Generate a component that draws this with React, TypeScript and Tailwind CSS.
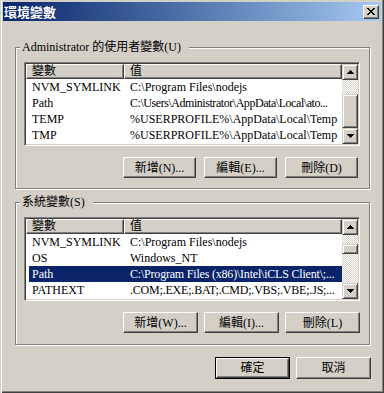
import React from "react";

const raised =
  "border border-t-white border-l-white border-r-[#404040] border-b-[#404040] shadow-[inset_-1px_-1px_0_#808080] bg-[#d4d0c8]";
const sbRaised =
  "border border-t-[#d4d0c8] border-l-[#d4d0c8] border-r-[#404040] border-b-[#404040] shadow-[inset_1px_1px_0_#fff,inset_-1px_-1px_0_#808080] bg-[#d4d0c8]";
const sunken =
  "border border-t-[#808080] border-l-[#808080] border-r-white border-b-white p-px shadow-[inset_1px_1px_0_#404040,inset_-1px_-1px_0_#d4d0c8]";
const checker =
  "bg-[repeating-conic-gradient(#d4d0c8_0%_25%,#ffffff_0%_50%)] bg-size-[2px_2px]";

// [name, value, extra class for the value cell]
type Row = [string, string, string?];

const userRows: Row[] = [
  ["NVM_SYMLINK", "C:\\Program Files\\nodejs"],
  ["Path", "C:\\Users\\Administrator\\AppData\\Local\\ato...", "tracking-[-0.45px]"],
  ["TEMP", "%USERPROFILE%\\AppData\\Local\\Temp"],
  ["TMP", "%USERPROFILE%\\AppData\\Local\\Temp"],
];

const sysRows: Row[] = [
  ["NVM_SYMLINK", "C:\\Program Files\\nodejs"],
  ["OS", "Windows_NT"],
  ["Path", "C:\\Program Files (x86)\\Intel\\iCLS Client\\;...", "tracking-[-0.2px]"],
  ["PATHEXT", ".COM;.EXE;.BAT;.CMD;.VBS;.VBE;.JS;...", "tracking-[-0.2px]"],
];

function Arrow({ up }: { up?: boolean }) {
  const rows = up
    ? [
        [3, 0, 1],
        [2, 1, 3],
        [1, 2, 5],
        [0, 3, 7],
      ]
    : [
        [0, 0, 7],
        [1, 1, 5],
        [2, 2, 3],
        [3, 3, 1],
      ];
  return (
    <svg width="7" height="4" viewBox="0 0 7 4" shapeRendering="crispEdges">
      {rows.map(([x, y, w]) => (
        <rect key={y} x={x} y={y} width={w} height={1} fill="#000" />
      ))}
    </svg>
  );
}

function CloseGlyph() {
  const px = [
    [0, 0, 2], [6, 0, 2],
    [1, 1, 2], [5, 1, 2],
    [2, 2, 4],
    [3, 3, 2],
    [2, 4, 4],
    [1, 5, 2], [5, 5, 2],
    [0, 6, 2], [6, 6, 2],
  ];
  return (
    <svg width="8" height="7" viewBox="0 0 8 7" shapeRendering="crispEdges">
      {px.map(([x, y, w], i) => (
        <rect key={i} x={x} y={y} width={w} height={1} fill="#000" />
      ))}
    </svg>
  );
}

function ScrollBar({ top, thumb }: { top: string; thumb: string }) {
  return (
    <div className="flex w-[16px] shrink-0 flex-col">
      <div className={`flex h-[16px] items-center justify-center ${sbRaised}`}>
        <Arrow up />
      </div>
      <div className={`${top} ${checker}`} />
      <div className={`${thumb} ${sbRaised}`} />
      <div className={`flex-1 ${checker}`} />
      <div className={`flex h-[16px] items-center justify-center ${sbRaised}`}>
        <Arrow />
      </div>
    </div>
  );
}

function ListView({ rows, sel, bar }: { rows: Row[]; sel?: number; bar: React.ReactNode }) {
  return (
    <div className={`flex h-[84px] w-[336px] bg-white ${sunken}`}>
      <div className="flex min-w-0 flex-1 flex-col overflow-hidden">
        <div className="flex h-[15px] shrink-0 leading-[13px]">
          <div className={`w-[98px] pl-[5px] ${raised}`}>變數</div>
          <div className={`flex-1 pl-[5px] ${raised}`}>值</div>
        </div>
        {rows.map(([name, value, tight], i) => (
          <div key={name} className="flex h-[16px] shrink-0 pl-[3px] leading-[16px]">
            <div className={`flex min-w-0 flex-1 ${i === sel ? "bg-[#0a246a] text-white" : ""}`}>
              <div className="w-[95px] shrink-0 overflow-hidden whitespace-nowrap pl-[3px]">{name}</div>
              <div className={`min-w-0 flex-1 overflow-hidden whitespace-nowrap pl-[6px] ${tight ?? ""}`}>
                {value}
              </div>
            </div>
          </div>
        ))}
      </div>
      {bar}
    </div>
  );
}

function Btn({ children, className }: { children: React.ReactNode; className: string }) {
  return (
    <button className={`flex items-center justify-center leading-none ${raised} ${className}`}>
      {children}
    </button>
  );
}

function Group({ label, h, children }: { label: string; h: string; children: React.ReactNode }) {
  return (
    <div
      className={`relative w-[355px] ${h} border border-[#808080] pl-[8px] pt-[14px] shadow-[inset_1px_1px_0_#fff,1px_1px_0_#fff]`}
    >
      <span className="absolute -top-[9px] left-[4px] bg-[#d4d0c8] pl-[2px] pr-[8px] leading-[16px]">
        {label}
      </span>
      {children}
    </div>
  );
}

export default function App() {
  return (
    <div className="h-[393px] w-[384px] bg-[#d4d0c8] px-[3px] pt-[2px] font-['Liberation_Serif','Noto_Sans_CJK_TC',serif] text-[12px] text-black shadow-[inset_1px_0_0_#d4d0c8,inset_2px_0_0_#fff,inset_-1px_-1px_0_#404040,inset_-2px_-2px_0_#808080]">
      <div className="flex h-[19px] items-center justify-between bg-linear-to-r from-[#0a246a] to-[#a6caf0] pl-[1px] pr-[2px]">
        <span className="font-['Noto_Sans_CJK_TC',sans-serif] text-[13px] font-bold leading-none text-white">
          環境變數
        </span>
        <div className={`flex h-[14px] w-[16px] items-center justify-center ${raised}`}>
          <CloseGlyph />
        </div>
      </div>

      <div className="pl-[12px] pt-[26px]">
        <Group label="Administrator 的使用者變數(U)" h="h-[142px]">
          <ListView rows={userRows} bar={<ScrollBar top="h-[14px]" thumb="h-[34px]" />} />
          <div className="mt-[11px] flex w-[336px] justify-end gap-[8px] pr-[2px]">
            <Btn className="h-[21px] w-[73px]">新增(N)...</Btn>
            <Btn className="h-[21px] w-[73px]">編輯(E)...</Btn>
            <Btn className="h-[21px] w-[73px]">刪除(D)</Btn>
          </div>
        </Group>

        <div className="mt-[13px]">
          <Group label="系統變數(S)" h="h-[143px]">
            <ListView rows={sysRows} sel={2} bar={<ScrollBar top="h-[9px]" thumb="h-[10px]" />} />
            <div className="mt-[11px] flex w-[336px] justify-end gap-[6px]">
              <Btn className="h-[21px] w-[75px]">新增(W)...</Btn>
              <Btn className="h-[21px] w-[75px]">編輯(I)...</Btn>
              <Btn className="h-[21px] w-[75px]">刪除(L)</Btn>
            </div>
          </Group>
        </div>

        <div className="mt-[12px] flex justify-end gap-[6px] pr-[10px]">
          <div className="h-[22px] w-[75px] border border-black">
            <Btn className="h-full w-full">確定</Btn>
          </div>
          <Btn className="h-[22px] w-[75px]">取消</Btn>
        </div>
      </div>
    </div>
  );
}
